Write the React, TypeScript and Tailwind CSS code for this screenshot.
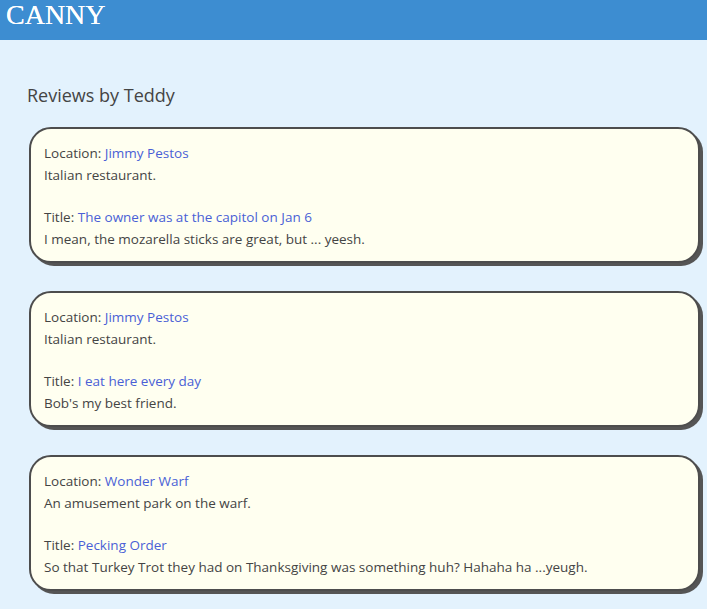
const reviews = [
  {
    location: "Jimmy Pestos",
    description: "Italian restaurant.",
    title: "The owner was at the capitol on Jan 6",
    body: "I mean, the mozarella sticks are great, but ... yeesh.",
  },
  {
    location: "Jimmy Pestos",
    description: "Italian restaurant.",
    title: "I eat here every day",
    body: "Bob's my best friend.",
  },
  {
    location: "Wonder Warf",
    description: "An amusement park on the warf.",
    title: "Pecking Order",
    body: "So that Turkey Trot they had on Thanksgiving was something huh? Hahaha ha ...yeugh.",
  },
]

function ReviewCard({ review }: { review: (typeof reviews)[number] }) {
  return (
    <div className="ml-[29px] mr-[7px] mb-[28px] rounded-[22px] border-2 border-[#4d4d4d] bg-[#fffff0] px-[13px] pt-[13px] pb-[11px] shadow-[3px_3px_0_#555] text-[13.5px] leading-[22px] text-[#444]">
      <div>
        Location: <a className="text-[#4a5fd6]">{review.location}</a>
      </div>
      <div>{review.description}</div>
      <div className="mt-[20px]">
        Title: <a className="text-[#4a5fd6]">{review.title}</a>
      </div>
      <div>{review.body}</div>
    </div>
  )
}

export default function App() {
  return (
    <div className="min-h-[609px] bg-[#e3f2fd] font-['Open_Sans',sans-serif]">
      <header className="h-[40px] bg-[#3d8dd1] px-[6px]">
        <h1 className="font-['Liberation_Serif',serif] text-[28px] leading-[29px] text-white [text-shadow:0_0_0.6px_#fff]">
          CANNY
        </h1>
      </header>
      <h2 className="ml-[27px] mt-[43px] mb-[20px] text-[18px] leading-[24px] text-[#444]">
        Reviews by Teddy
      </h2>
      {reviews.map((r, i) => (
        <ReviewCard key={i} review={r} />
      ))}
    </div>
  )
}
